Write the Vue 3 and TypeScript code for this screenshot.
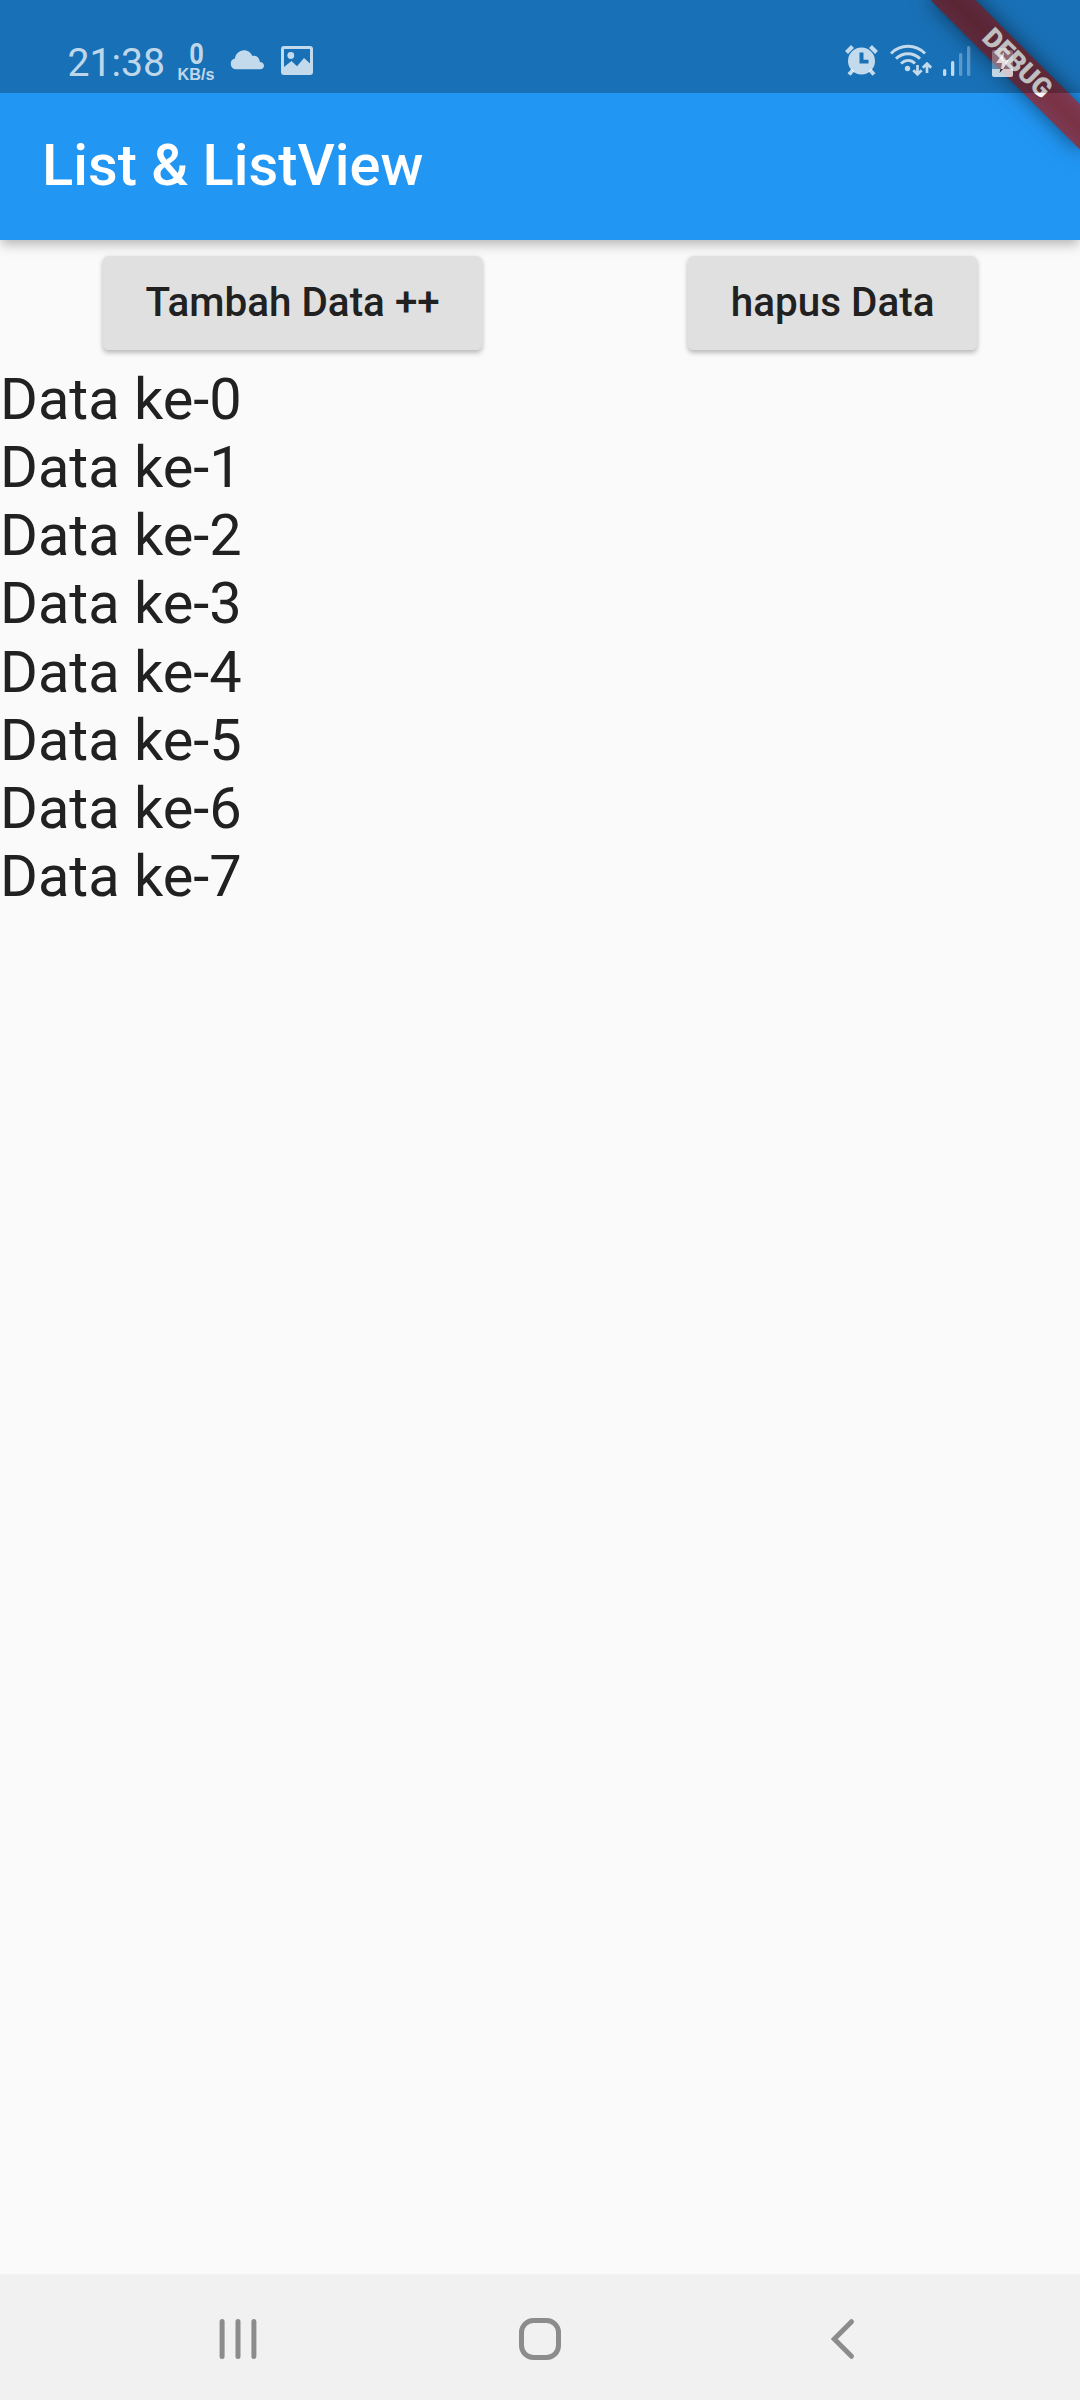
<script setup lang="ts">
import { ref } from 'vue'

const items = ref<string[]>(Array.from({ length: 8 }, (_, i) => `Data ke-${i}`))

function addItem(): void {
  items.value.push(`Data ke-${items.value.length}`)
}

function removeItem(): void {
  items.value.pop()
}
</script>

<template>
  <div class="screen">
    <header class="appbar">
      <h1 class="title">List &amp; ListView</h1>
    </header>

    <div class="banner-clip">
      <div class="banner">DEBUG</div>
    </div>

    <div class="status">
      <span class="clock">21:38</span>
      <div class="speed">
        <span class="speed-value">0</span>
        <span class="speed-unit">KB/s</span>
      </div>
      <svg class="cloud" width="36" height="20" viewBox="0 0 36 20">
        <path d="M5.500 19.300a5.500 5.500 0 0 1-.5-10.800C5.500 3.800 9.300.2 14 .2c3.900 0 7 2.300 8.300 5.800 4.100-.8 7.300 2 7.500 5.900 2.500 0 4.200 1.700 4.200 3.800 0 2.100-1.700 3.600-3.800 3.600z" fill="currentColor" />
      </svg>
      <svg class="photo" width="32" height="30" viewBox="0 0 32 30">
        <path fill-rule="evenodd" d="M3 0h26a3 3 0 0 1 3 3v23a3 3 0 0 1-3 3H3a3 3 0 0 1-3-3V3a3 3 0 0 1 3-3zm0 3v18l7.500-6 5.500 5.300 7-8.300 6 5.500V3z" fill="currentColor" />
        <circle cx="9.800" cy="9.500" r="3.400" fill="currentColor" />
      </svg>
      <div class="spacer"></div>
      <svg class="alarm" width="34" height="32" viewBox="0.500 0 34 32">
        <path fill-rule="evenodd" d="M17 3.500a13.500 13.500 0 1 1 0 27 13.500 13.500 0 0 1 0-27zM15 8.500v11h9v-3.700h-5V8.500z" fill="currentColor" />
        <path d="M2 8.500l6-6M32 8.500l-6-6" stroke="currentColor" stroke-width="4.200" fill="none" />
        <path d="M8.500 26l-4 4.500M25.500 26l4 4.500" stroke="currentColor" stroke-width="4" fill="none" />
      </svg>
      <svg class="wifi" width="42" height="33" viewBox="0 0 42 33">
        <g fill="none" stroke="currentColor" stroke-width="3">
          <path d="M1 9.500c9.500-9.600 24.500-9.600 34 0" />
          <path d="M6 14.700c7-6.700 17-6.700 24 0" />
          <path d="M11 19.500c4.500-4 10-4 14 0" />
          <path d="M27.500 21v9M23.300 26.300l4.200 4 4.200-4M37 29v-9M32.800 23.700l4.200-4 4.200 4" stroke-width="2.700" />
        </g>
        <circle cx="17.500" cy="24.500" r="2.700" fill="currentColor" />
      </svg>
      <svg class="signal" width="28" height="30" viewBox="0 0 28 30">
        <g fill="currentColor">
          <rect x="0" y="23" width="3.300" height="7" rx="1.500" />
          <rect x="8" y="15" width="3.300" height="15" rx="1.500" />
          <rect x="16" y="7" width="3.300" height="23" rx="1.500" opacity=".4" />
          <rect x="24" y="0" width="3.300" height="30" rx="1.500" opacity=".4" />
        </g>
      </svg>
      <svg class="battery" width="21" height="30" viewBox="0 0 21 30">
        <path d="M0 22V5a2 2 0 0 1 2-2h4V1h9v2h4a2 2 0 0 1 2 2v17z" fill="currentColor" opacity=".42" />
        <path d="M0 22h21v6a2 2 0 0 1-2 2H2a2 2 0 0 1-2-2z" fill="currentColor" />
        <path d="M12 5L4 16h6l-1 6h2l6-9h-6z" fill="currentColor" />
        <path d="M8.500 22h2.500L7.500 26z" fill="#16262e" />
      </svg>
    </div>

    <main class="body">
      <div class="actions">
        <button class="raised" @click="addItem">Tambah Data ++</button>
        <button class="raised" @click="removeItem">hapus Data</button>
      </div>
      <div class="list">
        <div v-for="item in items" :key="item" class="item">{{ item }}</div>
      </div>
    </main>

    <nav class="nav">
      <svg width="40" height="42" viewBox="0 0 40 42">
        <path d="M5.100 3.500v35M21 3.500v35M36.900 3.500v35" class="line" />
      </svg>
      <svg width="42" height="42" viewBox="0 0 42 42">
        <rect x="2.500" y="2.500" width="37" height="37" rx="12" class="line" />
      </svg>
      <svg width="40" height="42" viewBox="0 0 40 42">
        <path d="M28.500 3.700L11.300 21l17.200 17.300" class="line" />
      </svg>
    </nav>
  </div>
</template>

<style>
body {
  margin: 0;
  background: #fafafa;
}
</style>

<style scoped>
.screen {
  position: relative;
  display: flex;
  flex-direction: column;
  width: 1080px;
  height: 2400px;
  overflow: hidden;
  background: #fafafa;
  font-family: Roboto, "Liberation Sans", sans-serif;
  color: #212121;
}

.appbar {
  box-sizing: border-box;
  flex: none;
  height: 240px;
  padding: 93px 42px 3px;
  display: flex;
  align-items: center;
  background: #2196f3;
  box-shadow: 0 5px 10px -2px rgba(0, 0, 0, 0.18), 0 6px 13px rgba(0, 0, 0, 0.12);
}

.title {
  margin: 0;
  font-size: 57.75px;
  line-height: 68px;
  font-weight: 500;
  color: #fff;
  white-space: nowrap;
}

/* Diagonal ribbon in the corner, under the translucent status bar */
.banner-clip {
  position: absolute;
  top: 0;
  right: 0;
  width: 240px;
  height: 240px;
  overflow: hidden;
}

.banner {
  position: absolute;
  left: 135px;
  top: 73.5px;
  width: 210px;
  height: 31.5px;
  line-height: 31.5px;
  text-align: center;
  font-size: 26.8px;
  font-weight: 900;
  color: #fff;
  background:
    linear-gradient(rgba(183, 28, 28, 0.627), rgba(183, 28, 28, 0.627)),
    linear-gradient(rgba(0, 0, 0, 0.28), rgba(0, 0, 0, 0.43), rgba(0, 0, 0, 0.28));
  box-shadow: 0 0 21px rgba(0, 0, 0, 0.5);
  transform-origin: 105px -73.5px;
  transform: rotate(45deg);
}

.status {
  position: absolute;
  top: 0;
  left: 0;
  box-sizing: border-box;
  width: 1080px;
  height: 93px;
  padding: 23px 67px 0 67.5px;
  display: flex;
  align-items: flex-start;
  background: rgba(0, 0, 0, 0.25);
  color: rgba(255, 255, 255, 0.74);
}

.status svg {
  flex: none;
  display: block;
}

.clock {
  font-size: 39.2px;
  line-height: 46px;
  margin-top: 17px;
  width: 109.5px;
}

.speed {
  display: flex;
  flex-direction: column;
  align-items: center;
  width: 38px;
  margin-top: 19px;
}

.speed-value {
  font-size: 29.5px;
  line-height: 24px;
  font-weight: 700;
  transform: scaleX(0.86);
}

.speed-unit {
  font-family: "Liberation Sans", sans-serif;
  font-size: 16.2px;
  line-height: 16px;
  font-weight: 700;
}

.cloud {
  margin: 27px 0 0 15px;
}

.photo {
  margin: 23px 0 0 15px;
}

.spacer {
  flex: 1;
}

.alarm {
  margin: 21px 11px 0 0;
}

.wifi {
  margin: 21px 11px 0 0;
}

.signal {
  margin: 23px 21px 0 0;
}

.battery {
  margin-top: 24px;
}

.body {
  flex: 1;
}

.actions {
  display: flex;
  justify-content: space-around;
  align-items: center;
  height: 126px;
}

.raised {
  box-sizing: border-box;
  height: 94.5px;
  padding: 0 42.6px 2px;
  border: 0;
  border-radius: 5.25px;
  background: #e0e0e0;
  font-family: inherit;
  font-size: 40.425px;
  font-weight: 500;
  color: #212121;
  white-space: nowrap;
  box-shadow: 0 3px 5px rgba(0, 0, 0, 0.22), 0 1px 6px rgba(0, 0, 0, 0.08);
}

.list {
  margin-top: -1.4px;
}

.item {
  height: 68.25px;
  font-size: 57.75px;
  line-height: 68.25px;
}

.nav {
  flex: none;
  height: 126px;
  padding: 4px 86px 0;
  box-sizing: border-box;
  display: flex;
  align-items: center;
  justify-content: space-around;
  background: #f1f1f1;
}

.line {
  fill: none;
  stroke: #8c8c8c;
  stroke-width: 5;
  stroke-linecap: round;
}
</style>
